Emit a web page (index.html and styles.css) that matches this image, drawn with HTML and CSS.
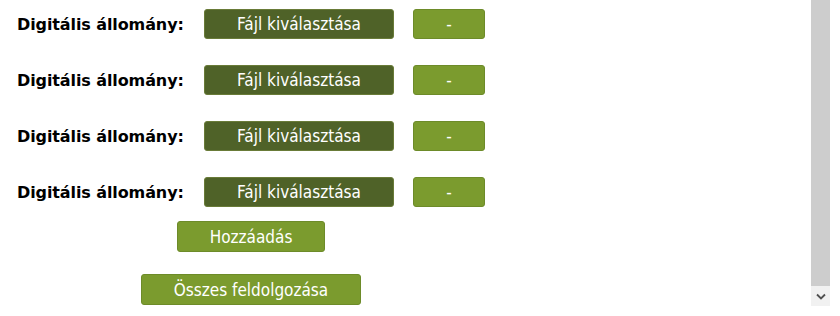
FILE: index.html
```html
<!DOCTYPE html>
<html lang="hu">
<head>
<meta charset="utf-8">
<title>Feltöltés</title>
<link rel="stylesheet" href="styles.css">
</head>
<body>
<div class="page">
  <main class="content">
    <div class="form">
      <div class="row">
        <span class="label">Digitális állomány:</span>
        <button class="btn btn-dark btn-file">Fájl kiválasztása</button>
        <button class="btn btn-light btn-remove">-</button>
      </div>
      <div class="row">
        <span class="label">Digitális állomány:</span>
        <button class="btn btn-dark btn-file">Fájl kiválasztása</button>
        <button class="btn btn-light btn-remove">-</button>
      </div>
      <div class="row">
        <span class="label">Digitális állomány:</span>
        <button class="btn btn-dark btn-file">Fájl kiválasztása</button>
        <button class="btn btn-light btn-remove">-</button>
      </div>
      <div class="row">
        <span class="label">Digitális állomány:</span>
        <button class="btn btn-dark btn-file">Fájl kiválasztása</button>
        <button class="btn btn-light btn-remove">-</button>
      </div>
      <div class="actions">
        <button class="btn btn-light btn-add">Hozzáadás</button>
        <button class="btn btn-light btn-process">Összes feldolgozása</button>
      </div>
    </div>
  </main>
  <div class="scrollbar">
    <div class="thumb"></div>
    <div class="arrow">
      <svg width="10" height="7" viewBox="0 0 10 7"><path d="M1 1.5 L5 5.5 L9 1.5" fill="none" stroke="#505050" stroke-width="1.8"/></svg>
    </div>
  </div>
</div>
</body>
</html>
```
FILE: styles.css
```css
html, body {
  margin: 0;
  padding: 0;
  background: #ffffff;
}
.page {
  display: flex;
  width: 840px;
  height: 316px;
  overflow: hidden;
}
.content {
  width: 811px;
  flex: none;
}
.form {
  width: 468px;
  padding: 9px 0 0 17px;
}
.row {
  display: flex;
  align-items: center;
  height: 30px;
  margin-bottom: 26px;
}
.row:nth-child(4) {
  margin-bottom: 14px;
}
.label {
  width: 187px;
  flex: none;
  font-family: "DejaVu Sans", sans-serif;
  font-weight: bold;
  font-size: 16px;
  letter-spacing: -0.1px;
  color: #000;
  white-space: nowrap;
}
.btn {
  box-sizing: border-box;
  height: 30px;
  border-radius: 3px;
  color: #ffffff;
  font-family: "DejaVu Sans Condensed", "DejaVu Sans", sans-serif;
  font-size: 17px;
  padding: 0;
  cursor: pointer;
}
.btn-dark {
  background: #4f6228;
  border: 1px solid #697b38;
}
.btn-light {
  background: #7b9b2e;
  border: 1px solid #6d8b29;
}
.btn-file {
  width: 190px;
}
.btn-remove {
  width: 72px;
  margin-left: 19px;
}
.actions {
  display: flex;
  flex-direction: column;
  align-items: center;
}
.btn-add {
  width: 148px;
  height: 31px;
}
.btn-process {
  width: 220px;
  height: 31px;
  margin-top: 22px;
}
.scrollbar {
  width: 19px;
  flex: none;
  display: flex;
  flex-direction: column;
}
.thumb {
  height: 286px;
  background: #cdcdcd;
}
.arrow {
  height: 20px;
  background: #f1f1f1;
  display: flex;
  align-items: center;
  justify-content: center;
}
```
